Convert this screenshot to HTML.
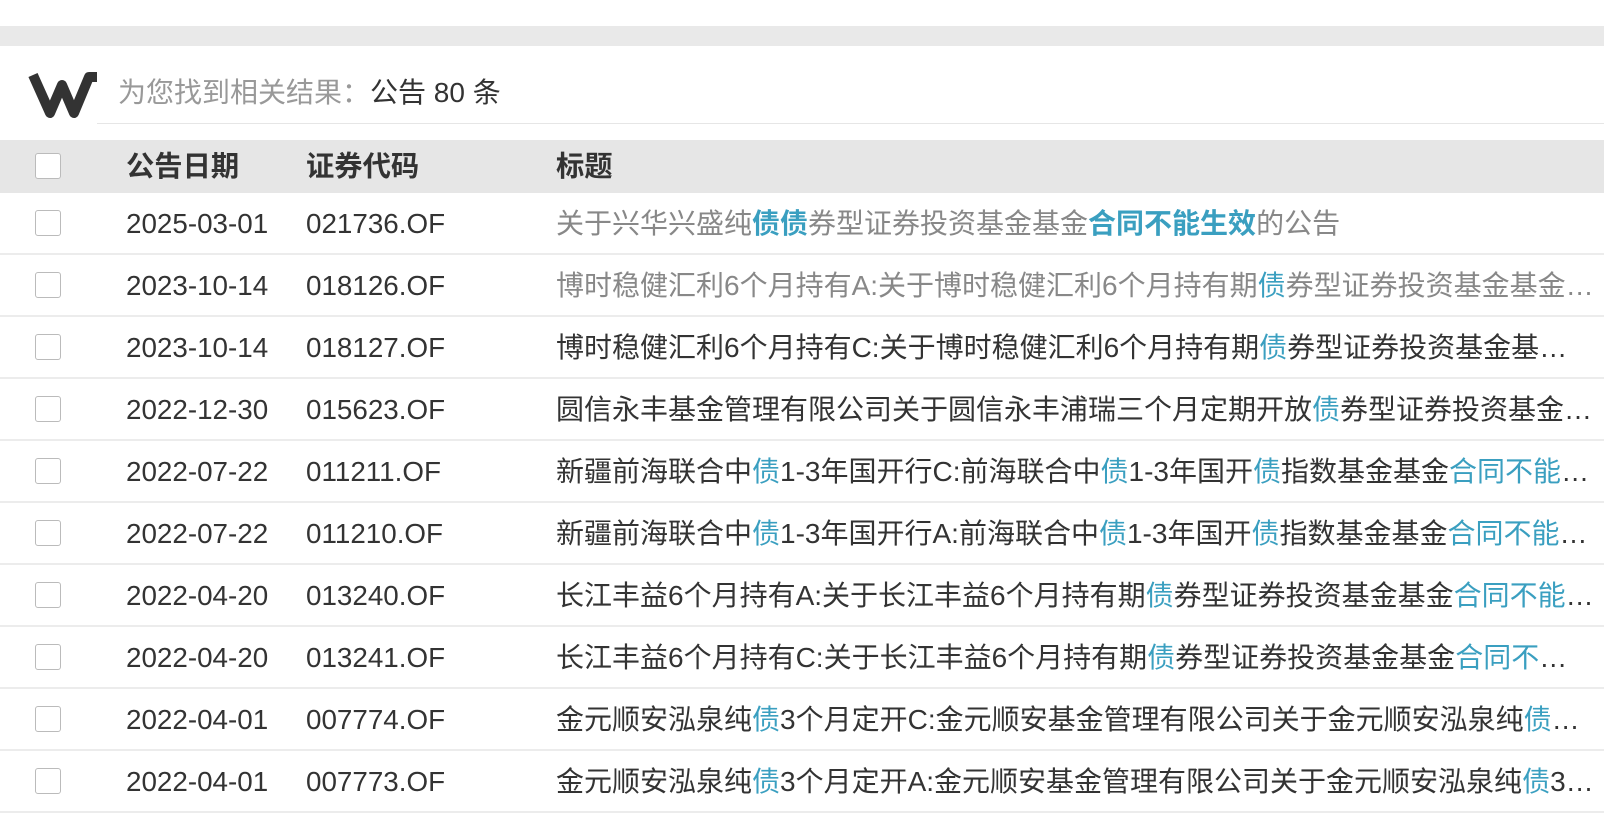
<!DOCTYPE html>
<html><head><meta charset="utf-8"><style>
*{margin:0;padding:0;box-sizing:border-box}
body{width:1604px;height:822px;background:#fff;overflow:hidden;position:relative;font-family:"Liberation Sans","Noto Sans CJK SC",sans-serif;color:#333}
.band{position:absolute;left:0;top:26px;width:1604px;height:20px;background:#e9e9e9}
.logo{position:absolute;left:0;top:0}
.res{position:absolute;left:118px;top:74px;font-size:28px;line-height:38px;color:#999}
.res span{color:#333}
.uline{position:absolute;left:97px;top:123px;width:1507px;height:1px;background:#e6e6e6}
.hdr{position:absolute;left:0;top:140px;width:1604px;height:53px;background:#e6e6e6;font-weight:bold}
.row{position:absolute;left:0;width:1604px;height:62px;border-bottom:2px solid #ececec}
.cb{position:absolute;left:35px;width:26px;height:26px;border:1.5px solid #bbb;border-radius:3px;background:#fff}
.c{position:absolute;top:0;white-space:nowrap;font-size:27.8px;line-height:61px}
.hdr .c{line-height:53px;font-size:28.3px}
.t{position:absolute;top:0;left:556px;width:1038px;overflow:hidden;text-overflow:ellipsis;white-space:nowrap;font-size:28px;line-height:61px}
.g{color:#888}
b{color:#3a9fc0;font-weight:normal}
b.s{font-weight:bold}
</style></head><body>
<div class="band"></div>
<svg class="logo" width="110" height="130" viewBox="0 0 110 130"><polyline points="33,75 50,113 62,85 74,113 89,77 97,77" fill="none" stroke="#333" stroke-width="10" stroke-linejoin="round" stroke-linecap="butt"/></svg>
<div class="res">为您找到相关结果：<span>公告 80 条</span></div>
<div class="uline"></div>
<div class="hdr">
<div class="cb" style="top:13px"></div>
<div class="c" style="left:126px">公告日期</div>
<div class="c" style="left:306px">证券代码</div>
<div class="c" style="left:556px">标题</div>
</div>
<div class="row" style="top:193px"><div class="cb" style="top:17px"></div><div class="c" style="left:126px">2025-03-01</div><div class="c" style="left:306px">021736.OF</div><div class="t g">关于兴华兴盛纯<b class="s">债债</b>券型证券投资基金基金<b class="s">合同不能生效</b>的公告</div></div>
<div class="row" style="top:255px"><div class="cb" style="top:17px"></div><div class="c" style="left:126px">2023-10-14</div><div class="c" style="left:306px">018126.OF</div><div class="t g">博时稳健汇利6个月持有A:关于博时稳健汇利6个月持有期<b>债</b>券型证券投资基金基金合同不能生效的公告</div></div>
<div class="row" style="top:317px"><div class="cb" style="top:17px"></div><div class="c" style="left:126px">2023-10-14</div><div class="c" style="left:306px">018127.OF</div><div class="t">博时稳健汇利6个月持有C:关于博时稳健汇利6个月持有期<b>债</b>券型证券投资基金基金合同不能生效的公告</div></div>
<div class="row" style="top:379px"><div class="cb" style="top:17px"></div><div class="c" style="left:126px">2022-12-30</div><div class="c" style="left:306px">015623.OF</div><div class="t">圆信永丰基金管理有限公司关于圆信永丰浦瑞三个月定期开放<b>债</b>券型证券投资基金基金合同不能生效的公告</div></div>
<div class="row" style="top:441px"><div class="cb" style="top:17px"></div><div class="c" style="left:126px">2022-07-22</div><div class="c" style="left:306px">011211.OF</div><div class="t">新疆前海联合中<b>债</b>1-3年国开行C:前海联合中<b>债</b>1-3年国开<b>债</b>指数基金基金<b>合同不能生效</b>的公告</div></div>
<div class="row" style="top:503px"><div class="cb" style="top:17px"></div><div class="c" style="left:126px">2022-07-22</div><div class="c" style="left:306px">011210.OF</div><div class="t">新疆前海联合中<b>债</b>1-3年国开行A:前海联合中<b>债</b>1-3年国开<b>债</b>指数基金基金<b>合同不能生效</b>的公告</div></div>
<div class="row" style="top:565px"><div class="cb" style="top:17px"></div><div class="c" style="left:126px">2022-04-20</div><div class="c" style="left:306px">013240.OF</div><div class="t">长江丰益6个月持有A:关于长江丰益6个月持有期<b>债</b>券型证券投资基金基金<b>合同不能生效</b>的公告</div></div>
<div class="row" style="top:627px"><div class="cb" style="top:17px"></div><div class="c" style="left:126px">2022-04-20</div><div class="c" style="left:306px">013241.OF</div><div class="t">长江丰益6个月持有C:关于长江丰益6个月持有期<b>债</b>券型证券投资基金基金<b>合同不能生效</b>的公告</div></div>
<div class="row" style="top:689px"><div class="cb" style="top:17px"></div><div class="c" style="left:126px">2022-04-01</div><div class="c" style="left:306px">007774.OF</div><div class="t">金元顺安泓泉纯<b>债</b>3个月定开C:金元顺安基金管理有限公司关于金元顺安泓泉纯<b>债</b>3个月定期开放债券型证券投资基金</div></div>
<div class="row" style="top:751px"><div class="cb" style="top:17px"></div><div class="c" style="left:126px">2022-04-01</div><div class="c" style="left:306px">007773.OF</div><div class="t">金元顺安泓泉纯<b>债</b>3个月定开A:金元顺安基金管理有限公司关于金元顺安泓泉纯<b>债</b>3个月定期开放债券型证券投资基金</div></div>
</body></html>
